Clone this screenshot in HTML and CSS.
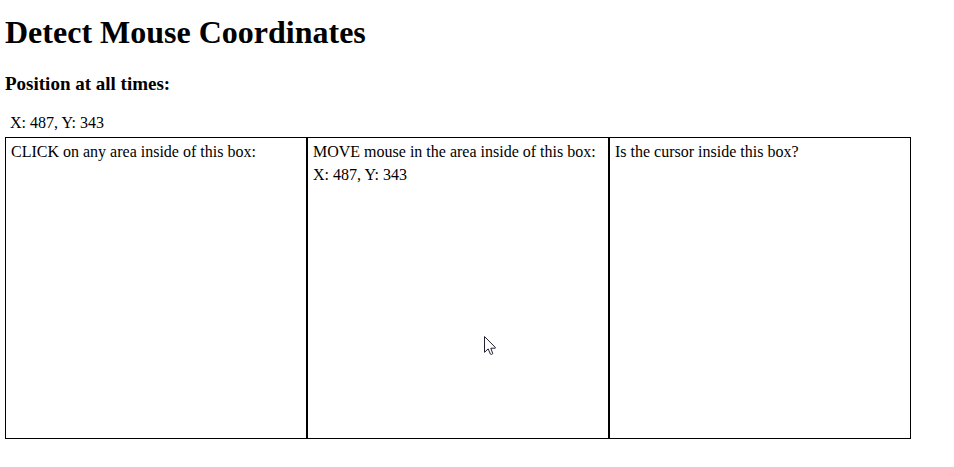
FILE: index.html
```html
<!DOCTYPE html>
<html lang="en">
<head>
<meta charset="utf-8">
<title>Detect Mouse Coordinates</title>
<link rel="stylesheet" href="styles.css">
</head>
<body>
<h1>Detect Mouse Coordinates</h1>
<h3>Position at all times:</h3>
<div class="position">X: 487, Y: 343</div>
<main class="boxes">
<section class="box">
<div class="line">CLICK on any area inside of this box:</div>
</section>
<section class="box">
<div class="line">MOVE mouse in the area inside of this box:</div>
<div class="line">X: 487, Y: 343</div>
</section>
<section class="box">
<div class="line">Is the cursor inside this box?</div>
</section>
</main>
<svg class="cursor" width="12" height="20" viewBox="0 0 12 20" aria-hidden="true">
<path d="M.5 .5V16.3L4.2 12.9L6.4 18.1Q7.4 19 8.8 17.6L6.8 12.2H11.3V11.4Z" fill="#fff" stroke="#223" stroke-linejoin="round"/>
</svg>
</body>
</html>
```
FILE: styles.css
```css
* {
  box-sizing: border-box;
}

body {
  margin: 14px 5px;
  font: 16px/18px "Liberation Serif", "Times New Roman", serif;
  color: #000;
  background: #fff;
}

h1 {
  margin: 0 0 24px;
  font-size: 32px;
  line-height: 36px;
}

h3 {
  margin: 0 0 18px;
  font-size: 19px;
  line-height: 20px;
}

.position {
  padding: 2px 5px 5px;
}

.boxes {
  display: flex;
  max-width: 906px;
}

.box {
  flex: 1;
  min-height: 302px;
  padding: 5px;
  border: 1px solid #000;
}

.line {
  margin-bottom: 5px;
}

.cursor {
  position: absolute;
  left: 484px;
  top: 336px;
}
```
